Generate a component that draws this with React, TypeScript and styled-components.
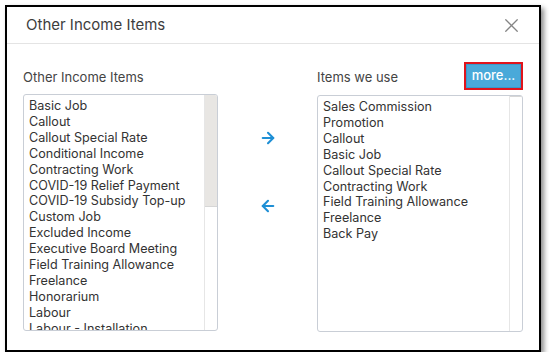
import styled, { createGlobalStyle } from "styled-components";
import { ArrowLeft, ArrowRight, X } from "lucide-react";

const GlobalStyle = createGlobalStyle`
  body {
    margin: 0;
    background: #ffffff;
    font-family: Inter, "Noto Sans", sans-serif;
  }
`;

const Page = styled.div`
  padding: 5px 0 0 5px;
`;

const Dialog = styled.div`
  width: 532px;
  height: 343px;
  border: 2px solid #000000;
  background: #ffffff;
  box-shadow: 3px 3px 5px rgba(0, 0, 0, 0.45);
  display: flex;
  flex-direction: column;
`;

const Header = styled.div`
  height: 36px;
  display: flex;
  align-items: center;
  justify-content: space-between;
  padding: 0 16px 0 19px;
  border-bottom: 1px solid #e4e4e4;
`;

const Title = styled.h1`
  margin: 0 0 2px;
  font-size: 15px;
  font-weight: 400;
  color: #3d3d3d;
`;

const CloseBtn = styled.button`
  border: none;
  background: none;
  padding: 0;
  display: flex;
  color: #858585;
  cursor: pointer;
`;

const Body = styled.div`
  display: grid;
  grid-template-columns: 195px 1fr 206px;
  padding: 18px 16px 0;
`;

const Column = styled.section`
  display: flex;
  flex-direction: column;
  gap: 4px;
`;

const ColumnHead = styled.div`
  height: 28px;
  display: flex;
  align-items: center;
  justify-content: space-between;
`;

const Label = styled.span`
  font-size: 13px;
  color: #444444;
  padding-top: 2px;
`;

const MoreBtn = styled.button`
  height: 28px;
  width: 59px;
  border: 2px solid #e0141b;
  background: #4aa9d9;
  box-shadow: inset 0 0 0 1px #3b98c8;
  color: #ffffff;
  font-family: inherit;
  font-size: 13px;
  font-weight: 500;
  padding: 0 0 2px;
  cursor: pointer;
`;

const ListBox = styled.div<{ $offset: number }>`
  height: 235px;
  margin-top: ${({ $offset }) => $offset}px;
  border: 1px solid #c9ced6;
  border-radius: 3px;
  display: flex;
  overflow: hidden;
`;

const Items = styled.ul`
  flex: 1;
  margin: 0;
  padding: 3px 0 0 5px;
  list-style: none;
  overflow: hidden;
`;

const Item = styled.li`
  font-size: 12.6px;
  line-height: 15.9px;
  color: #333333;
  white-space: nowrap;
`;

const Track = styled.div`
  width: 12px;
  border-left: 1px solid #e6e6e6;
  display: flex;
  flex-direction: column;
`;

const Thumb = styled.div<{ $size: number }>`
  height: ${({ $size }) => $size}px;
  background: #e8e6e3;
  border-bottom: 1px solid #d6d6d6;
`;

const Mover = styled.div`
  display: flex;
  flex-direction: column;
  align-items: center;
  gap: 50px;
  padding-top: 67px;
`;

const ArrowBtn = styled.button`
  border: none;
  background: none;
  padding: 0;
  display: flex;
  color: #1e8fd5;
  cursor: pointer;
`;

const otherItems = [
  "Basic Job",
  "Callout",
  "Callout Special Rate",
  "Conditional Income",
  "Contracting Work",
  "COVID-19 Relief Payment",
  "COVID-19 Subsidy Top-up",
  "Custom Job",
  "Excluded Income",
  "Executive Board Meeting",
  "Field Training Allowance",
  "Freelance",
  "Honorarium",
  "Labour",
  "Labour - Installation",
];

const usedItems = [
  "Sales Commission",
  "Promotion",
  "Callout",
  "Basic Job",
  "Callout Special Rate",
  "Contracting Work",
  "Field Training Allowance",
  "Freelance",
  "Back Pay",
];

export default function App() {
  return (
    <Page>
      <GlobalStyle />
      <Dialog>
        <Header>
          <Title>Other Income Items</Title>
          <CloseBtn aria-label="Close">
            <X size={23} strokeWidth={1.3} />
          </CloseBtn>
        </Header>
        <Body>
          <Column>
            <ColumnHead>
              <Label>Other Income Items</Label>
            </ColumnHead>
            <ListBox $offset={0}>
              <Items>
                {otherItems.map((item) => (
                  <Item key={item}>{item}</Item>
                ))}
              </Items>
              <Track>
                <Thumb $size={111} />
              </Track>
            </ListBox>
          </Column>
          <Mover>
            <ArrowBtn aria-label="Add">
              <ArrowRight size={18} strokeWidth={2.8} />
            </ArrowBtn>
            <ArrowBtn aria-label="Remove">
              <ArrowLeft size={18} strokeWidth={2.8} />
            </ArrowBtn>
          </Mover>
          <Column>
            <ColumnHead>
              <Label>Items we use</Label>
              <MoreBtn>more...</MoreBtn>
            </ColumnHead>
            <ListBox $offset={1}>
              <Items>
                {usedItems.map((item) => (
                  <Item key={item}>{item}</Item>
                ))}
              </Items>
              <Track>
                <Thumb $size={0} />
              </Track>
            </ListBox>
          </Column>
        </Body>
      </Dialog>
    </Page>
  );
}
